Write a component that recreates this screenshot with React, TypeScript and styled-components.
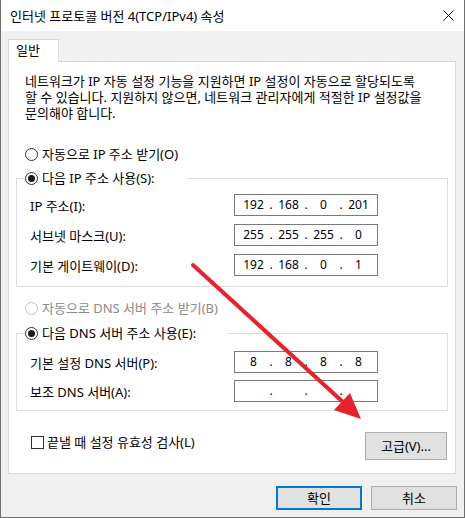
import styled, { createGlobalStyle } from "styled-components";

const GlobalStyle = createGlobalStyle`
  html, body {
    margin: 0;
    padding: 0;
    background: #ffffff;
  }
  body {
    font-family: "Noto Sans", "Noto Sans CJK KR", sans-serif;
    font-size: 13px;
    color: #000000;
  }
`;

const Window = styled.div`
  position: relative;
  width: 465px;
  height: 518px;
  box-sizing: border-box;
  border: 1px solid #6f6f6f;
  border-top: none;
  background: #f0f0f0;
  display: flex;
  flex-direction: column;
`;

const TitleBar = styled.div`
  height: 31px;
  flex: none;
  background: #ffffff;
  display: flex;
  align-items: center;
  justify-content: space-between;
  padding: 0 10px 1px 9px;
  box-sizing: border-box;
`;

const Body = styled.div`
  flex: 1;
  display: flex;
  flex-direction: column;
  padding: 8px 7px 7px 7px;
`;

const TabStrip = styled.div`
  display: flex;
`;

const Tab = styled.div`
  position: relative;
  z-index: 1;
  width: 51px;
  height: 23px;
  box-sizing: border-box;
  border: 1px solid #d9d9d9;
  border-bottom: none;
  background: #ffffff;
  padding-left: 7px;
  line-height: 21px;
  margin-bottom: -1px;
`;

const Panel = styled.div`
  border: 1px solid #d9d9d9;
  background: #ffffff;
  margin-right: 1px;
  padding: 11px 7px 13px 7px;
  display: flex;
  flex-direction: column;
`;

const Description = styled.p`
  margin: 0;
  padding-left: 9px;
  line-height: 16px;
  white-space: nowrap;
`;

const Choice = styled.label<{ $top: number; $disabled?: boolean }>`
  display: flex;
  align-items: center;
  gap: 4px;
  height: 16px;
  line-height: 16px;
  margin-top: ${(p) => p.$top}px;
  padding-left: 9px;
  color: ${(p) => (p.$disabled ? "#8a8a8a" : "#000000")};
`;

const RadioDot = styled.span<{ $checked?: boolean; $disabled?: boolean }>`
  width: 13px;
  height: 13px;
  box-sizing: border-box;
  border-radius: 50%;
  border: 1px solid ${(p) => (p.$disabled ? "#c2c2c2" : "#333333")};
  background: #ffffff;
  display: flex;
  align-items: center;
  justify-content: center;
  flex: none;

  &::after {
    content: "";
    display: ${(p) => (p.$checked ? "block" : "none")};
    width: 7px;
    height: 7px;
    border-radius: 50%;
    background: #1a1a1a;
  }
`;

const Group = styled.fieldset<{ $top: number }>`
  margin: ${(p) => p.$top}px 0 0 0;
  padding: 0;
  border: 1px solid #dcdcdc;
  min-width: 0;
`;

const Legend = styled.legend`
  margin-left: 8px;
  padding: 0 32px 0 0;
  display: flex;
  align-items: center;
  gap: 4px;
  height: 16px;
  line-height: 16px;
`;

const Rows = styled.div<{ $gap: number; $top: number; $bottom: number }>`
  display: flex;
  flex-direction: column;
  gap: ${(p) => p.$gap}px;
  padding: ${(p) => p.$top}px 0 ${(p) => p.$bottom}px 13px;
`;

const Row = styled.div`
  display: grid;
  grid-template-columns: 204px 144px;
  align-items: center;
  height: 22px;
`;

const AddrBox = styled.div`
  width: 144px;
  height: 22px;
  box-sizing: border-box;
  border: 1px solid #7a7a7a;
  background: #ffffff;
  display: flex;
  align-items: center;
  padding-left: 3px;
  font-size: 12px;
  line-height: 16px;
`;

const Octet = styled.span`
  width: 31px;
  text-align: center;
`;

const Dot = styled.span`
  width: 4px;
  text-align: center;
`;

const BottomRow = styled.div`
  display: flex;
  justify-content: space-between;
  align-items: flex-start;
  margin-top: 21px;
`;

const CheckLabel = styled.label`
  display: flex;
  align-items: center;
  gap: 3px;
  height: 16px;
  line-height: 16px;
  margin-top: 2px;
  padding-left: 15px;
`;

const CheckBox = styled.span`
  width: 13px;
  height: 13px;
  box-sizing: border-box;
  border: 1px solid #333333;
  background: #ffffff;
  flex: none;
`;

const Button = styled.button<{ $w: number; $h: number; $primary?: boolean }>`
  width: ${(p) => p.$w}px;
  height: ${(p) => p.$h}px;
  box-sizing: border-box;
  border: ${(p) => (p.$primary ? "2px solid #0078d7" : "1px solid #adadad")};
  background: #e1e1e1;
  font-family: inherit;
  font-size: 13px;
  color: #000000;
  padding: 0;
  line-height: 16px;
`;

const AdvancedButton = styled(Button)`
  margin-right: 1px;
`;

const Footer = styled.div`
  display: flex;
  justify-content: flex-end;
  gap: 9px;
  margin-top: 12px;
`;

const Overlay = styled.svg`
  position: absolute;
  left: 0;
  top: 0;
  pointer-events: none;
`;

const Address = ({ parts }: { parts: string[] }) => (
  <AddrBox>
    {parts.map((p, i) => (
      <span key={i} style={{ display: "contents" }}>
        <Octet>{p}</Octet>
        {i < 3 && <Dot>.</Dot>}
      </span>
    ))}
  </AddrBox>
);

const CloseIcon = () => (
  <svg width="11" height="11" viewBox="0 0 11 11">
    <path d="M0.5 0.5 L10.5 10.5 M10.5 0.5 L0.5 10.5" stroke="#000" strokeWidth="1" />
  </svg>
);

export default function App() {
  return (
    <>
      <GlobalStyle />
      <Window>
        <TitleBar>
          <span>인터넷 프로토콜 버전 4(TCP/IPv4) 속성</span>
          <CloseIcon />
        </TitleBar>
        <Body>
          <TabStrip>
            <Tab>일반</Tab>
          </TabStrip>
          <Panel>
            <Description>
              네트워크가 IP 자동 설정 기능을 지원하면 IP 설정이 자동으로 할당되도록
              <br />할 수 있습니다. 지원하지 않으면, 네트워크 관리자에게 적절한 IP 설정값을
              <br />문의해야 합니다.
            </Description>

            <Choice $top={25}>
              <RadioDot />
              자동으로 IP 주소 받기(O)
            </Choice>
            <Group $top={8}>
              <Legend>
                <RadioDot $checked />
                다음 IP 주소 사용(S):
              </Legend>
              <Rows $gap={8} $top={8} $bottom={10}>
                <Row>
                  <span>IP 주소(I):</span>
                  <Address parts={["192", "168", "0", "201"]} />
                </Row>
                <Row>
                  <span>서브넷 마스크(U):</span>
                  <Address parts={["255", "255", "255", "0"]} />
                </Row>
                <Row>
                  <span>기본 게이트웨이(D):</span>
                  <Address parts={["192", "168", "0", "1"]} />
                </Row>
              </Rows>
            </Group>

            <Choice $top={13} $disabled>
              <RadioDot $disabled />
              자동으로 DNS 서버 주소 받기(B)
            </Choice>
            <Group $top={9}>
              <Legend>
                <RadioDot $checked />
                다음 DNS 서버 주소 사용(E):
              </Legend>
              <Rows $gap={7} $top={10} $bottom={8}>
                <Row>
                  <span>기본 설정 DNS 서버(P):</span>
                  <Address parts={["8", "8", "8", "8"]} />
                </Row>
                <Row>
                  <span>보조 DNS 서버(A):</span>
                  <Address parts={["", "", "", ""]} />
                </Row>
              </Rows>
            </Group>

            <BottomRow>
              <CheckLabel>
                <CheckBox />
                끝낼 때 설정 유효성 검사(L)
              </CheckLabel>
              <AdvancedButton $w={82} $h={28}>고급(V)...</AdvancedButton>
            </BottomRow>
          </Panel>
          <Footer>
            <Button $w={86} $h={24} $primary>확인</Button>
            <Button $w={86} $h={24}>취소</Button>
          </Footer>
        </Body>
        <Overlay width="465" height="518" viewBox="0 0 465 518">
          <line x1="192" y1="265" x2="343" y2="403" stroke="#e8212a" strokeWidth="4" strokeLinecap="round" />
          <polygon points="360,419 333,410 349,393" fill="#e8212a" />
        </Overlay>
      </Window>
    </>
  );
}
